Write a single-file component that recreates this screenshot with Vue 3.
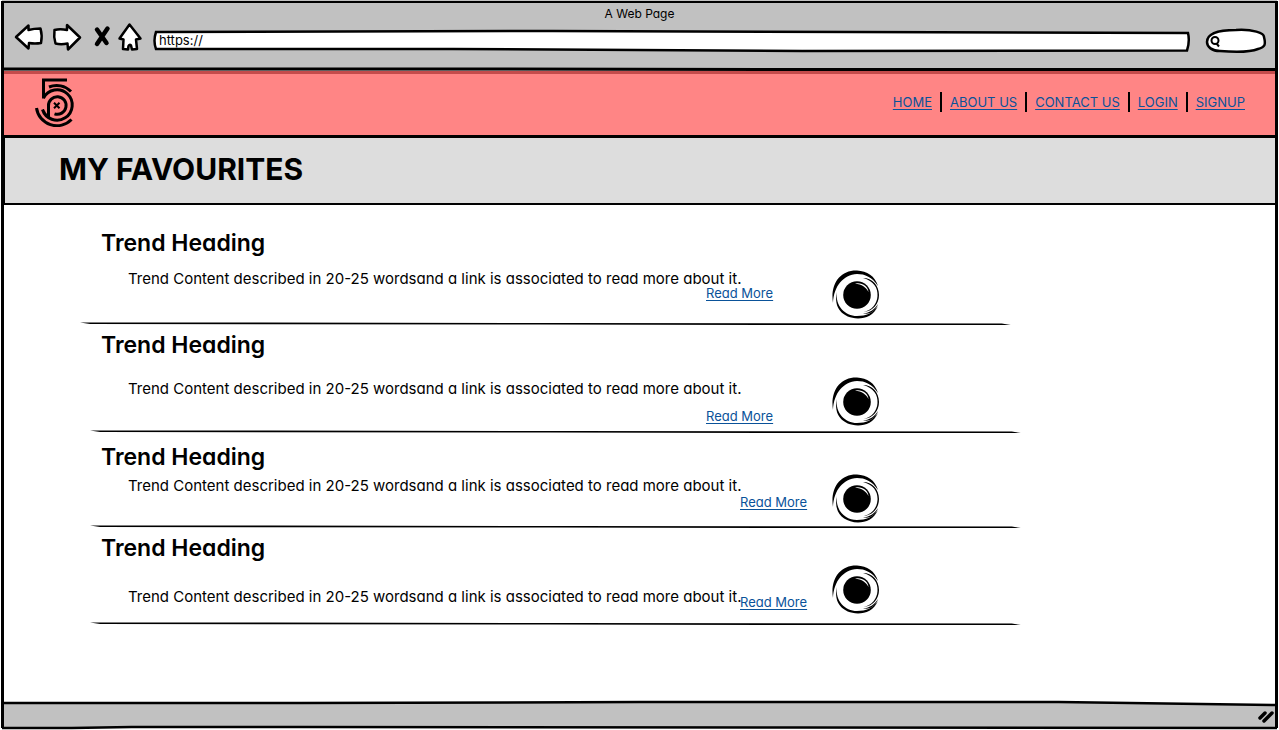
<script setup>
const links = ['HOME', 'ABOUT US', 'CONTACT US', 'LOGIN', 'SIGNUP']
const content = 'Trend Content described in 20-25 wordsand a link is associated to read more about it.'
const trends = ['first', 'second', 'third', 'fourth']
</script>

<template>
  <div class="browser">
    <header class="chrome">
      <svg class="edge top" viewBox="0 0 1279 4" preserveAspectRatio="none" aria-hidden="true">
        <path d="M0 2 L480 2 L800 2 L1279 2" />
      </svg>
      <div class="window-title">A Web Page</div>
      <div class="toolbar">
        <button class="tool back" aria-label="Back">
          <svg width="30" height="30" viewBox="0 0 30 30">
            <path d="M2 15 L14.500 3.500 V8 Q20 6.500 26.500 6.500 Q28.500 13.500 27 21 Q21 22 15 21 L14.500 26.500 Z" class="shape" />
          </svg>
        </button>
        <button class="tool forward" aria-label="Forward">
          <svg width="30" height="30" viewBox="0 0 30 30">
            <path d="M28 15.500 L15 3 V8 Q8 6.500 2.500 8 Q1.500 14.500 3.500 21.500 Q9 22.800 15.500 21.500 L16 27.500 Z" class="shape" />
          </svg>
        </button>
        <button class="tool stop" aria-label="Stop">
          <svg width="20" height="24" viewBox="0 0 20 24">
            <path d="M5 4.500 L14.500 18 M15.500 3.500 L5 19" class="cross" />
          </svg>
        </button>
        <button class="tool home" aria-label="Home">
          <svg width="26" height="30" viewBox="0 0 26 30">
            <path d="M12.500 2.500 L23.500 16.500 L19 17.500 L20 27 L15 27.500 L14 23.500 Q12.500 22 11.500 24 L11 27.500 L6 27 L6.500 17.500 L2.500 16.500 Z" class="shape" />
          </svg>
        </button>
        <label class="address">
          <svg viewBox="0 0 1039 24" preserveAspectRatio="none" aria-hidden="true">
            <path d="M3 3 L400 2 L700 3 L1036 4 Q1038 12 1035 21.500 L650 22 L300 20 L3 20 Q0 12 3 3 Z" />
          </svg>
          <input type="text" value="https://" aria-label="Address" />
        </label>
        <label class="search">
          <svg viewBox="0 0 62 28" preserveAspectRatio="none" aria-hidden="true">
            <path d="M2 15 C2 7 13 3 31 3 C48 2 59 6 59 10 C61 18 60 20 53 22 C43 26 28 25 15 24 C7 24 2 20 2 15 Z" />
            <circle cx="10" cy="13.500" r="3.500" class="lens" />
            <path d="M11.500 16.500 L14 19.500" class="lens" />
          </svg>
          <input type="search" aria-label="Search" />
        </label>
      </div>
      <svg class="edge" viewBox="0 0 1279 4" preserveAspectRatio="none" aria-hidden="true">
        <path d="M0 2 L400 2 L860 2.500 L1279 2.500" />
      </svg>
    </header>

    <nav class="site-nav" aria-label="Main">
      <a href="#" class="logo" aria-label="Home page">
        <svg width="42" height="50" viewBox="0 0 42 50">
          <path d="M33 3 H9.500 V21.500" />
          <path d="M9.500 21 A15.200 15.200 0 1 1 8.500 32.500 Q10.500 37.500 14.500 40.500" />
          <path d="M15 10 A20 20 0 0 1 37 14.500" />
          <path d="M14.500 41 V28.700 A8.800 8.800 0 1 1 20.500 36.800" />
          <path d="M2.500 31 A20.500 20.500 0 0 0 37.500 42.500" />
          <path d="M20 25.700 L25.500 31.200 M25.500 25.700 L20 31.200" class="mark" />
        </svg>
      </a>
      <ul>
        <li v-for="link in links" :key="link"><a href="#">{{ link }}</a></li>
      </ul>
    </nav>

    <section class="banner">
      <h1>MY FAVOURITES</h1>
    </section>

    <main>
      <article v-for="name in trends" :key="name" :class="name">
        <div class="body">
          <div class="copy">
            <h2>Trend Heading</h2>
            <p>{{ content }}</p>
            <a href="#">Read More</a>
          </div>
          <svg class="eye" width="48" height="50" viewBox="0 0 48 50" aria-hidden="true">
            <path d="M1 33 C-2 14 8 0 25 0.500 C35 1 43 6 46 16 C40 7 33 4 25 4 C11 5 2 16 1 33 Z" />
            <path d="M5 22 C3 36 13 46 25 46 C34 46 41 43 46 36 C42 45 34 48.500 26 48.500 C11 48 1 38 5 22 Z" />
            <path d="M31 8 C42 11 46 18 45.500 26 C45 34 40 40 32 42 C41 41 47 34 47 25 C47 15 40 8 31 8 Z" />
            <path d="M31 43.500 C38 43 43 39 46 34 C44 40 39 45 31 43.500 Z" />
            <circle cx="25" cy="25" r="13.800" />
            <path class="glint" d="M23 13.500 C30 12 36 16 36.500 22 C34 17 30 14.500 23 13.500 Z" />
          </svg>
        </div>
        <svg class="divider" viewBox="0 0 929 4" preserveAspectRatio="none" aria-hidden="true">
          <path d="M0 0.500 L180 0.500 L480 1 L920 1.500 L929 3 L700 3 L460 2.500 L10 2 Z" />
        </svg>
      </article>
    </main>

    <footer>
      <svg class="surface" viewBox="0 0 1279 30" preserveAspectRatio="none" aria-hidden="true">
        <path d="M0 3 L300 3 L640 2 L1060 2 L1279 5 V28 L800 27.500 L300 27 L130 27 L70 28 L0 28 Z" />
      </svg>
      <svg class="grip" width="18" height="16" viewBox="0 0 18 16" aria-hidden="true">
        <path d="M3 11 L8 6 M7 14 L15 6" />
      </svg>
    </footer>
  </div>
</template>

<style>
body {
  margin: 0;
  background: #fff;
}
</style>

<style scoped>
.browser {
  position: relative;
  box-sizing: border-box;
  display: flex;
  flex-direction: column;
  min-height: 100vh;
  padding: 0 2px;
  font-family: Inter, Lato, sans-serif;
  font-feature-settings: "cv11";
  color: #000;
}
.browser::after {
  content: "";
  position: absolute;
  inset: 1px 1px 2px 1px;
  border: solid #000;
  border-width: 0 3px;
  pointer-events: none;
}
.chrome {
  background: #c1c1c1;
}
.edge {
  display: block;
  width: 100%;
  height: 4px;
  fill: none;
  stroke: #000;
  stroke-width: 3;
}
.edge.top {
  stroke-width: 2;
}
.window-title {
  font-size: 12px;
  line-height: 20px;
  text-align: center;
}
.toolbar {
  display: flex;
  align-items: center;
  height: 26px;
  padding: 0 10px 17px 12px;
}
.tool {
  display: flex;
  padding: 0;
  border: 0;
  background: none;
}
.tool svg {
  display: block;
}
.forward {
  margin-left: 8px;
}
.stop {
  margin-left: 10px;
}
.home {
  margin-left: 5px;
}
.shape {
  fill: #fff;
  stroke: #000;
  stroke-width: 2.5;
  stroke-linejoin: round;
}
.cross {
  stroke: #000;
  stroke-width: 4.5;
  stroke-linecap: round;
}
.address {
  position: relative;
  flex: 1;
  height: 24px;
  margin: 8px 14px 0 10px;
}
.search {
  position: relative;
  width: 62px;
  height: 28px;
  margin-top: 8px;
}
.address svg,
.search svg {
  position: absolute;
  inset: 0;
  width: 100%;
  height: 100%;
  fill: #fff;
  stroke: #000;
  stroke-width: 2.5;
}
.search .lens {
  stroke-width: 2;
}
.address input,
.search input {
  position: relative;
  display: block;
  box-sizing: border-box;
  width: 100%;
  height: 22px;
  padding: 0 6px;
  border: 0;
  outline: 0;
  background: none;
  font: 13px Inter, sans-serif;
}
.search input {
  padding-left: 20px;
  appearance: none;
}
.site-nav {
  display: flex;
  justify-content: space-between;
  align-items: center;
  box-sizing: border-box;
  height: 67px;
  padding: 0 32px 5px;
  border-top: 3px solid #c44c4c;
  border-bottom: 3px solid #000;
  background: #ff8585;
}
.logo svg {
  display: block;
  fill: none;
  stroke: #000;
  stroke-width: 3;
}
.logo .mark {
  stroke-width: 2;
}
.site-nav ul {
  display: flex;
  margin: 0;
  padding: 0;
  list-style: none;
}
.site-nav li {
  padding: 0 8px;
  border-left: 2px solid #000;
  font-size: 13px;
  line-height: 20px;
}
.site-nav li:first-child {
  border-left: 0;
}
.site-nav li:last-child {
  padding-right: 0;
}
a {
  color: #0a5299;
  text-underline-offset: 2px;
}
.banner {
  box-sizing: border-box;
  height: 67px;
  padding-left: 54px;
  border-left: 3px solid #000;
  border-bottom: 2px solid #000;
  background: #ddd;
}
h1 {
  margin: 0;
  font-size: 30px;
  line-height: 62px;
}
main {
  flex: 1;
}
article {
  width: 73%;
  min-width: 820px;
  margin-left: 88px;
}
.body {
  display: flex;
  align-items: flex-start;
}
.copy {
  width: 742px;
  padding-left: 11px;
  box-sizing: border-box;
}
h2 {
  margin: 0;
  font-size: 23px;
  font-weight: 600;
  line-height: 32px;
}
p {
  margin: 0 0 0 27px;
  font-size: 15px;
  line-height: 16px;
  white-space: nowrap;
}
.copy a {
  display: block;
  width: max-content;
  margin-left: 605px;
  font-size: 13px;
  line-height: 16px;
}
.eye {
  flex: none;
}
.glint {
  fill: #fff;
}
.divider {
  display: block;
  width: 100%;
  height: 4px;
}
.first {
  margin-left: 78px;
}
.first .body {
  height: 117px;
}
.first .copy {
  width: 752px;
  padding: 22px 0 0 21px;
}
.first p {
  margin-top: 12px;
}
.first a {
  margin-top: -2px;
}
.first .eye {
  margin-top: 65px;
}
.second .body {
  height: 104px;
}
.second .copy {
  padding-top: 3px;
}
.second p {
  margin-top: 20px;
}
.second a {
  margin-top: 11px;
}
.second .eye {
  margin-top: 51px;
}
.third .body {
  height: 91px;
}
.third .copy {
  padding-top: 7px;
}
.third p {
  margin-top: 5px;
}
.third a,
.fourth a {
  margin-left: 639px;
}
.third .eye {
  margin-top: 40px;
}
.fourth .body {
  height: 93px;
}
.fourth .copy {
  padding-top: 3px;
}
.fourth p {
  margin-top: 25px;
}
.fourth a {
  margin-top: -11px;
}
.fourth .eye {
  margin-top: 36px;
}
footer {
  position: relative;
  display: flex;
  justify-content: flex-end;
  align-items: center;
  height: 30px;
  padding-right: 2px;
}
.surface {
  position: absolute;
  inset: 0;
  width: 100%;
  height: 100%;
  fill: #c1c1c1;
  stroke: #000;
  stroke-width: 2.5;
}
.grip {
  position: relative;
  fill: none;
  stroke: #000;
  stroke-width: 3.5;
  stroke-linecap: round;
}
</style>
